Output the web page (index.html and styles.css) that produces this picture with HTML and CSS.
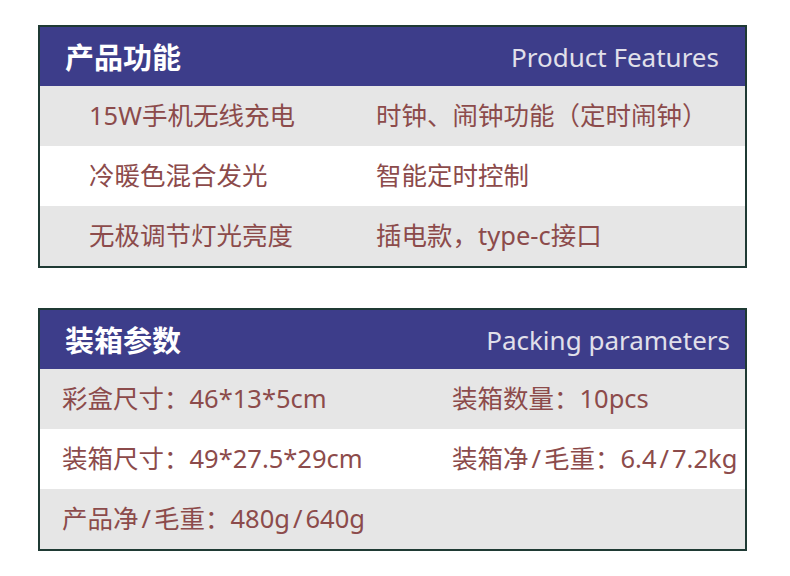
FILE: index.html
```html
<!DOCTYPE html>
<html lang="zh">
<head>
<meta charset="utf-8">
<link rel="stylesheet" href="styles.css">
</head>
<body>
<section class="panel panel-features">
  <div class="panel-head">
    <h2 class="title">产品功能</h2>
    <span class="subtitle">Product Features</span>
  </div>
  <div class="row row-gray">
    <span class="cell">15W手机无线充电</span>
    <span class="cell">时钟、闹钟功能（定时闹钟）</span>
  </div>
  <div class="row row-white">
    <span class="cell">冷暖色混合发光</span>
    <span class="cell">智能定时控制</span>
  </div>
  <div class="row row-gray">
    <span class="cell">无极调节灯光亮度</span>
    <span class="cell">插电款，type-c接口</span>
  </div>
</section>

<section class="panel panel-packing">
  <div class="panel-head">
    <h2 class="title">装箱参数</h2>
    <span class="subtitle">Packing parameters</span>
  </div>
  <div class="row row-gray">
    <span class="cell">彩盒尺寸：46*13*5cm</span>
    <span class="cell">装箱数量：10pcs</span>
  </div>
  <div class="row row-white">
    <span class="cell">装箱尺寸：49*27.5*29cm</span>
    <span class="cell">装箱净<span class="slash">/</span>毛重：6.4<span class="slash">/</span>7.2kg</span>
  </div>
  <div class="row row-gray">
    <span class="cell">产品净<span class="slash">/</span>毛重：480g<span class="slash">/</span>640g</span>
    <span class="cell"></span>
  </div>
</section>
</body>
</html>
```

FILE: styles.css
```css
html, body {
  margin: 0;
  padding: 0;
  background: #ffffff;
}

body {
  width: 790px;
  height: 576px;
  overflow: hidden;
  padding-top: 25px;
  box-sizing: border-box;
  font-family: "Noto Sans", "Noto Sans CJK SC", sans-serif;
  display: flex;
  flex-direction: column;
  gap: 40px;
}

.panel {
  margin-left: 38px;
  width: 709px;
  box-sizing: border-box;
  border: 2px solid #1f3a34;
  display: flex;
  flex-direction: column;
}

.panel-head {
  height: 59px;
  background: #3d3d8a;
  display: flex;
  align-items: center;
  justify-content: space-between;
  padding-left: 25px;
}

.panel-features .panel-head { padding-right: 26px; }
.panel-packing .panel-head { padding-right: 15px; }

.title {
  margin: 0;
  font-size: 29px;
  font-weight: 700;
  color: #ffffff;
  line-height: 1;
  margin-top: 2px;
}

.subtitle {
  font-size: 26px;
  color: #e1e0ea;
  line-height: 1;
}

.row {
  height: 60px;
  display: grid;
  align-items: center;
  font-size: 25.5px;
  color: #8c4b4b;
  line-height: 1;
}

.row-gray { background: #e6e6e6; }
.row-white { background: #ffffff; }

.panel-features .row {
  grid-template-columns: 287px 1fr;
  padding-left: 49px;
}

.panel-packing .row {
  grid-template-columns: 390px 1fr;
  padding-left: 22px;
}

.cell {
  white-space: nowrap;
}

.slash {
  margin: 0 3px;
}
```
